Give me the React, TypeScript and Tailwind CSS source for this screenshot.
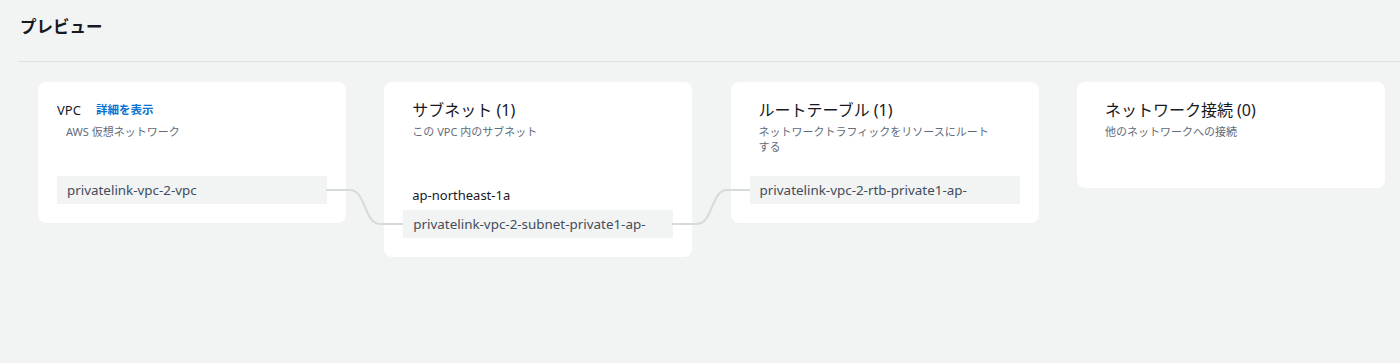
const font = {
  fontFamily: '"Noto Sans", "Noto Sans CJK JP", sans-serif',
};

type TResourceCardProps = {
  title: string;
  subtitle: string;
  children?: React.ReactNode;
};

function ResourceCard({ title, subtitle, children }: TResourceCardProps) {
  return (
    <div className="flex w-[308px] shrink-0 flex-col rounded-lg bg-white p-[19px]">
      <div className="min-h-[68px] pl-[9px] pr-[20px]">
        <div className="text-[16px] leading-[18px] text-[#16191f]">{title}</div>
        <div className="mt-[5px] text-[11px] leading-[15px] text-[#5f6b7a]">
          {subtitle}
        </div>
      </div>
      {children}
    </div>
  );
}

function ResourceBox({ name }: { name: string }) {
  return (
    <div className="h-[28px] truncate bg-[#f2f3f3] px-[10px] text-[13.4px] leading-[28px] text-[#414d5c]">
      {name}
    </div>
  );
}

function Connectors() {
  return (
    <svg
      className="pointer-events-none absolute left-0 top-0"
      width="1400"
      height="180"
      fill="none"
    >
      <path
        d="M326 108 H350 C366 108 364 142 380 142 H403"
        stroke="#d5dbdb"
        strokeWidth="2"
      />
      <path
        d="M672 142 H697 C713 142 711 108 727 108 H750"
        stroke="#d5dbdb"
        strokeWidth="2"
      />
    </svg>
  );
}

export default function App() {
  return (
    <div className="h-[363px] w-full bg-[#f2f3f3]" style={font}>
      <div className="pl-[20px] pt-[15px] text-[16.5px] font-bold leading-[24px] text-[#16191f]">
        プレビュー
      </div>
      <div className="ml-[18px] mt-[22px] h-[1px] bg-[#dfe2e2]" />
      <div className="relative mt-[20px] flex items-start gap-[38.3px] pl-[38px]">
        <div className="flex w-[308px] shrink-0 flex-col rounded-lg bg-white p-[19px]">
          <div className="min-h-[68px]">
            <div className="flex items-center gap-[15px] leading-[18px]">
              <span className="text-[13px] text-[#16191f]">VPC</span>
              <span className="text-[11.5px] font-bold text-[#0972d3]">
                詳細を表示
              </span>
            </div>
            <div className="mt-[5px] pl-[9px] text-[11px] leading-[15px] text-[#5f6b7a]">
              AWS 仮想ネットワーク
            </div>
          </div>
          <div className="mt-[7px]">
            <ResourceBox name="privatelink-vpc-2-vpc" />
          </div>
        </div>

        <ResourceCard title="サブネット (1)" subtitle="この VPC 内のサブネット">
          <div className="mt-[16px] px-[9px] text-[13px] leading-[20px] text-[#16191f]">
            ap-northeast-1a
          </div>
          <div className="mt-[5px]">
            <ResourceBox name="privatelink-vpc-2-subnet-private1-ap-" />
          </div>
        </ResourceCard>

        <ResourceCard
          title="ルートテーブル (1)"
          subtitle="ネットワークトラフィックをリソースにルートする"
        >
          <div className="mt-[7px]">
            <ResourceBox name="privatelink-vpc-2-rtb-private1-ap-" />
          </div>
        </ResourceCard>

        <ResourceCard title="ネットワーク接続 (0)" subtitle="他のネットワークへの接続" />

        <Connectors />
      </div>
    </div>
  );
}
